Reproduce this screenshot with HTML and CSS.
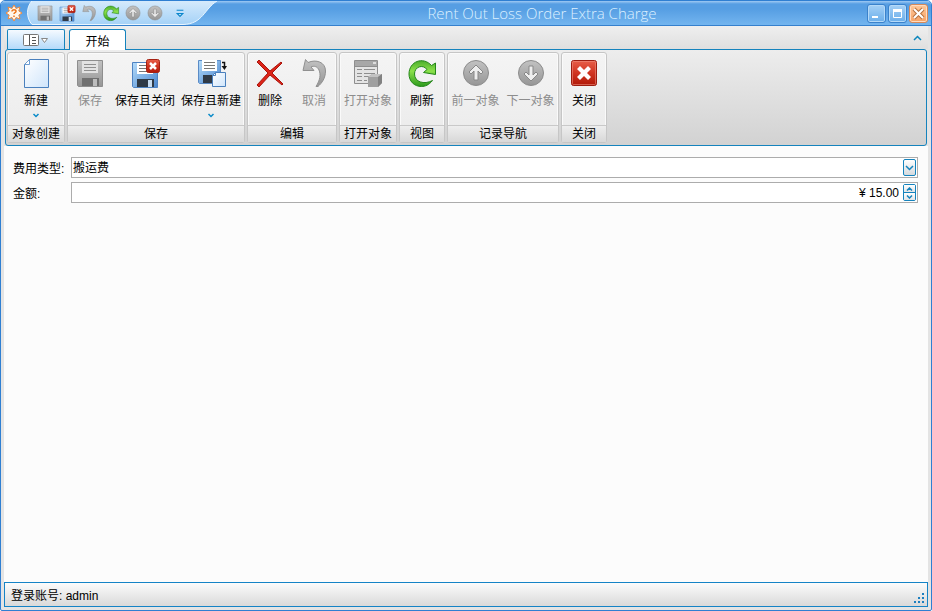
FILE: index.html
```
<!DOCTYPE html>
<html lang="zh-CN">
<head>
    <meta charset="UTF-8">
    <meta name="viewport" content="width=device-width, initial-scale=1.0">
    <title>Rent Out Loss Order Extra Charge</title>
    <link rel="stylesheet" href="styles.css">
</head>
<body>
    <svg class="sprite" width="0" height="0" aria-hidden="true">
        <defs>
            <linearGradient id="g-gray" x1="0" y1="0" x2="0" y2="1"><stop offset="0" stop-color="#c2c2c2"/><stop offset="1" stop-color="#969696"/></linearGradient>
            <linearGradient id="g-blue" x1="0" y1="0" x2="1" y2="1"><stop offset="0" stop-color="#b5dcfa"/><stop offset="1" stop-color="#4a86cf"/></linearGradient>
            <linearGradient id="g-page" x1="0" y1="0" x2="1" y2="1"><stop offset="0" stop-color="#ffffff"/><stop offset="1" stop-color="#cfe5fb"/></linearGradient>
            <linearGradient id="g-red" x1="0" y1="0" x2="0" y2="1"><stop offset="0" stop-color="#e8604a"/><stop offset="0.5" stop-color="#d03420"/><stop offset="1" stop-color="#b01808"/></linearGradient>
            <linearGradient id="g-green" x1="0" y1="0" x2="0" y2="1"><stop offset="0" stop-color="#4cae2c"/><stop offset="0.4" stop-color="#8be04a"/><stop offset="1" stop-color="#2c9a1c"/></linearGradient>
            <linearGradient id="g-qat" x1="0" y1="0" x2="0" y2="1"><stop offset="0" stop-color="#d5eafc"/><stop offset="1" stop-color="#a5d2f7"/></linearGradient>
        </defs>
        <symbol id="i-page" viewBox="0 0 32 32">
            <path d="M9.500 2.500H28.500V30.500H4.500V7.500Z" fill="url(#g-page)" stroke="#4a80bd"/>
            <path d="M4.500 7.500H9.500V2.500Z" fill="#fff" stroke="#6b9bd0"/>
        </symbol>
        <symbol id="i-save-off" viewBox="0 0 32 32">
            <path d="M3.500 3.500H28.500V29.500H4.500L3.500 28.500Z" fill="url(#g-gray)" stroke="#8e8e8e"/>
            <path d="M8 4H24V16H8Z" fill="#e2e2e2"/>
            <path d="M10 7.500H22M10 10.500H22M10 13.500H22" stroke="#8f8f8f"/>
            <path d="M8 21H25V29H8Z" fill="#707070"/>
            <path d="M19 22H23V29H19Z" fill="#bdbdbd"/>
        </symbol>
        <symbol id="i-save-close" viewBox="0 0 32 32">
            <path d="M3.500 5.500H28.500V30.500H4.500L3.500 29.500Z" fill="url(#g-blue)" stroke="#4f83c2"/>
            <path d="M8 6H24V17H8Z" fill="#fff"/>
            <path d="M10 8.500H22M10 11.500H22M10 14.500H22" stroke="#777"/>
            <path d="M8 22H25V30H8Z" fill="#303a46"/>
            <path d="M19 23H23V30H19Z" fill="#c8dcf0"/>
            <rect x="17.500" y="2.500" width="13" height="13" rx="2" fill="url(#g-red)" stroke="#a52112"/>
            <path d="M21 6L27 12M27 6L21 12" stroke="#fff" stroke-width="2.500"/>
        </symbol>
        <symbol id="i-save-new" viewBox="0 0 32 32">
            <path d="M3.500 3.500H25.500V26.500H4.500L3.500 25.500Z" fill="url(#g-blue)" stroke="#5a8bc6"/>
            <path d="M7 3H22V14H7Z" fill="#fff"/>
            <path d="M9 5.500H20M9 8.500H20M9 11.500H20" stroke="#777"/>
            <path d="M8 18H20V26H8Z" fill="#303a46"/>
            <path d="M20.500 15.500H30.500V29.500H17.500V18.500Z" fill="url(#g-page)" stroke="#4a80bd"/>
            <path d="M17.500 18.500H20.500V15.500" fill="none" stroke="#4a80bd"/>
            <path d="M27 5.500H29.500V10" fill="none" stroke="#111" stroke-width="1.500"/>
            <path d="M26.500 9H32L29.500 13Z" fill="#111"/>
        </symbol>
        <symbol id="i-delete" viewBox="0 0 32 32">
            <path d="M3 5L5 3L16 14L27 5L28 6L18 16L29 27L28 28L16 18L5 30L3 28L14 16Z" fill="#dd2418" stroke="#a8150d"/>
        </symbol>
        <symbol id="i-undo" viewBox="0 0 32 32">
            <path d="M7.500 2.500L10 5.500C18 2 27.500 5 27.500 14C27.500 21 24 26 20 29.500H18C22 23 23 18 21 13C19.500 9.500 16 8.500 13 10L16 13.500H5Z" fill="url(#g-gray)" stroke="#909090"/>
        </symbol>
        <symbol id="i-open" viewBox="0 0 32 32">
            <path d="M2.500 3.500H25.500V26.500H2.500Z" fill="#e4e4e4" stroke="#8e8e8e"/>
            <path d="M3 4H25V9H3Z" fill="#a8a8a8"/>
            <path d="M2 9.500H26" stroke="#8e8e8e"/>
            <path d="M21 5H24V7H21Z" fill="#ddd"/>
            <path d="M5 12.500H10M12 12.500H23M5 16.500H10M12 16.500H23M5 19.500H10M12 19.500H23M5 23.500H10M12 23.500H15" stroke="#8e8e8e"/>
            <path d="M16 20L20 17H30V26L26 30H16Z" fill="#a0a0a0"/>
            <path d="M16 20L20 17H30L26 20Z" fill="#c2c2c2"/>
            <path d="M26 20L30 17V26L26 30Z" fill="#828282"/>
        </symbol>
        <symbol id="i-refresh" viewBox="0 0 32 32">
            <path d="M29.500 6V17.500L17.500 15.500L21 12.500C17 7 8.500 9.500 8.500 17C8.500 25 18 28 26.500 23.500C23 28 19 29.500 15.500 29.500C8 29.500 3 24 3 17C3 4.500 17 -1 25.500 8.500Z" fill="url(#g-green)" stroke="#24861a"/>
        </symbol>
        <symbol id="i-up" viewBox="0 0 32 32">
            <circle cx="16" cy="16" r="12.500" fill="url(#g-gray)" stroke="#8c8c8c"/>
            <path d="M16 8L23 15L21 17L18 14V23H14V14L11 17L9 15Z" fill="#eee" stroke="#888"/>
        </symbol>
        <symbol id="i-down" viewBox="0 0 32 32">
            <circle cx="16" cy="16" r="12.500" fill="url(#g-gray)" stroke="#8c8c8c"/>
            <path d="M16 24L23 17L21 15L18 18V9H14V18L11 15L9 17Z" fill="#eee" stroke="#888"/>
        </symbol>
        <symbol id="i-close" viewBox="0 0 32 32">
            <rect x="3.500" y="3.500" width="25" height="25" rx="2" fill="url(#g-red)" stroke="#9c1d10"/>
            <rect x="4.500" y="4.500" width="23" height="23" rx="1" fill="none" stroke="#ee8c7c" stroke-opacity="0.600"/>
            <path d="M9 12L12 9L16 13L20 9L23 12L19 16L23 20L20 23L16 19L12 23L9 20L13 16Z" fill="#fff"/>
        </symbol>
        <symbol id="i-chevron" viewBox="0 0 8 5">
            <path d="M1.500 1L4 3.500L6.500 1" fill="none" stroke="#0b8bc9" stroke-width="1.500"/>
        </symbol>
    </svg>

    <div class="window">
        <header class="titlebar">
            <svg class="app-icon" viewBox="0 0 16 16"><path d="M8 0L10 3.500L14 2L12.800 6L16 8L12.800 10L14 14L10 12.500L8 16L6 12.500L2 14L3.200 10L0 8L3.200 6L2 2L6 3.500Z" fill="#fff7ec" stroke="#f08a3c"/><path d="M6 6.500C6 4 10.200 4.200 10 6.500C9.800 7.800 8 7.600 8 9M8 10.500V12" fill="none" stroke="#ef7417" stroke-width="1.500"/></svg>
            <div class="quick">
                <svg class="quick-bg" viewBox="0 0 190 24"><path d="M5 0H190C177 8 176 23 156 23.500H5C-1 17 -1 6 5 0Z" fill="url(#g-qat)"/><path d="M190 0C177 8 176 23 156 23.500H5C-1 17 -1 6 5 0" fill="none" stroke="#eaf6ff"/></svg>
                <button class="quick-btn" aria-label="保存"><svg><use href="#i-save-off"/></svg></button>
                <button class="quick-btn" aria-label="保存且关闭"><svg><use href="#i-save-close"/></svg></button>
                <button class="quick-btn" aria-label="取消"><svg><use href="#i-undo"/></svg></button>
                <button class="quick-btn" aria-label="刷新"><svg><use href="#i-refresh"/></svg></button>
                <button class="quick-btn" aria-label="前一对象"><svg><use href="#i-up"/></svg></button>
                <button class="quick-btn" aria-label="下一对象"><svg><use href="#i-down"/></svg></button>
                <button class="quick-btn quick-more" aria-label="更多"><svg viewBox="0 0 16 16"><path d="M5 5.500H11M5.500 8.500H10.500L8 11Z" fill="#fff" stroke="#0b86cc"/></svg></button>
            </div>
            <h1>Rent Out Loss Order Extra Charge</h1>
            <div class="controls">
                <button aria-label="最小化"><svg viewBox="0 0 17 17"><path d="M4 11H10V13H4Z" fill="#fff"/></svg></button>
                <button aria-label="最大化"><svg viewBox="0 0 17 17"><path d="M4.500 4.500H12.500V12.500H4.500Z" fill="none" stroke="#fff"/><path d="M4 4H13V7H4Z" fill="#fff"/></svg></button>
                <button class="exit" aria-label="关闭窗口"><svg viewBox="0 0 17 17"><path d="M4 4L13 13M13 4L4 13" stroke="#b5713f" stroke-width="4"/><path d="M4 4L13 13M13 4L4 13" stroke="#fff" stroke-width="2"/></svg></button>
            </div>
        </header>

        <div class="frame">
            <nav class="tabs">
                <button class="tab-file" aria-label="菜单"><svg width="26" height="14" viewBox="0 0 26 14"><rect x="0.500" y="1.500" width="15" height="11" rx="1" fill="#fff" stroke="#777"/><path d="M6.500 2V12M9 4.500H13M9 7.500H13M9 10.500H13" stroke="#555"/><path d="M18.500 5.500H24.500L21.500 9.500Z" fill="#fff" stroke="#888"/></svg></button>
                <button class="tab">开始</button>
                <button class="collapse" aria-label="折叠"><svg width="9" height="6" viewBox="0 0 9 6"><path d="M1 5L4.500 1.500L8 5" fill="none" stroke="#0b86bd" stroke-width="1.500"/></svg></button>
            </nav>

            <section class="ribbon">
                <div class="group">
                    <div class="group-items">
                        <button class="cmd"><svg><use href="#i-page"/></svg><span>新建</span><svg class="arrow"><use href="#i-chevron"/></svg></button>
                    </div>
                    <div class="group-title">对象创建</div>
                </div>
                <div class="group">
                    <div class="group-items">
                        <button class="cmd" disabled><svg><use href="#i-save-off"/></svg><span>保存</span></button>
                        <button class="cmd"><svg><use href="#i-save-close"/></svg><span>保存且关闭</span></button>
                        <button class="cmd"><svg><use href="#i-save-new"/></svg><span>保存且新建</span><svg class="arrow"><use href="#i-chevron"/></svg></button>
                    </div>
                    <div class="group-title">保存</div>
                </div>
                <div class="group">
                    <div class="group-items">
                        <button class="cmd"><svg><use href="#i-delete"/></svg><span>删除</span></button>
                        <button class="cmd" disabled><svg><use href="#i-undo"/></svg><span>取消</span></button>
                    </div>
                    <div class="group-title">编辑</div>
                </div>
                <div class="group">
                    <div class="group-items">
                        <button class="cmd" disabled><svg><use href="#i-open"/></svg><span>打开对象</span></button>
                    </div>
                    <div class="group-title">打开对象</div>
                </div>
                <div class="group">
                    <div class="group-items">
                        <button class="cmd"><svg><use href="#i-refresh"/></svg><span>刷新</span></button>
                    </div>
                    <div class="group-title">视图</div>
                </div>
                <div class="group">
                    <div class="group-items">
                        <button class="cmd wide" disabled><svg><use href="#i-up"/></svg><span>前一对象</span></button>
                        <button class="cmd wide" disabled><svg><use href="#i-down"/></svg><span>下一对象</span></button>
                    </div>
                    <div class="group-title">记录导航</div>
                </div>
                <div class="group">
                    <div class="group-items">
                        <button class="cmd"><svg><use href="#i-close"/></svg><span>关闭</span></button>
                    </div>
                    <div class="group-title">关闭</div>
                </div>
            </section>

            <main class="content">
                <form>
                    <label for="charge-type">费用类型:</label>
                    <div class="field">
                        <select id="charge-type"><option>搬运费</option></select>
                        <span class="drop"><svg width="9" height="6" viewBox="0 0 9 6"><path d="M1 1L4.500 4.500L8 1" fill="none" stroke="#1583bd" stroke-width="1.500"/></svg></span>
                    </div>
                    <label for="amount">金额:</label>
                    <div class="field">
                        <input type="text" id="amount" class="amount" value="¥ 15.00">
                        <div class="spin">
                            <button type="button" aria-label="增加"><svg width="7" height="4" viewBox="0 0 7 4"><path d="M1 3.500L3.500 1L6 3.500" fill="none" stroke="#1583bd" stroke-width="1.500"/></svg></button>
                            <button type="button" aria-label="减少"><svg width="7" height="4" viewBox="0 0 7 4"><path d="M1 0.500L3.500 3L6 0.500" fill="none" stroke="#1583bd" stroke-width="1.500"/></svg></button>
                        </div>
                    </div>
                </form>
            </main>

            <footer class="status">
                <span>登录账号: admin</span>
                <svg class="grip" width="12" height="12" viewBox="0 0 12 12"><path d="M9 1H11V3H9ZM5 5H7V7H5ZM9 5H11V7H9ZM1 9H3V11H1ZM5 9H7V11H5ZM9 9H11V11H9Z" fill="#1c7fc0"/></svg>
            </footer>
        </div>
    </div>
</body>
</html>
```
FILE: styles.css
```
*{
    margin: 0;
    padding: 0;
    box-sizing: border-box;
}

body, button, input, select{
    font-family: "Liberation Sans", "Noto Sans CJK SC", sans-serif;
    font-size: 12px;
    color: #000;
}

button{
    border: none;
    background: none;
}

svg{
    display: block;
}

.sprite{
    position: absolute;
}

.window{
    display: flex;
    flex-direction: column;
    min-height: 100vh;
    border: 1px solid #2f7fd2;
    border-radius: 5px 5px 2px 2px;
    overflow: hidden;
    background-color: #e4e4e4;
}

/* title bar */
.titlebar{
    display: flex;
    align-items: center;
    height: 25px;
    padding: 0 3px 0 5px;
    border-bottom: 1px solid #3580cd;
    background: linear-gradient(#9fc9f3, #569ee3 3px, #569ee3 8px, #73b5ef);
}

.app-icon{
    width: 16px;
    height: 16px;
    margin-right: 5px;
}

.quick{
    position: relative;
    display: flex;
    align-items: center;
    width: 190px;
    height: 24px;
    padding-left: 7px;
}

.quick-bg{
    position: absolute;
    left: 0;
    top: 0;
    width: 190px;
    height: 24px;
}

.quick-btn{
    position: relative;
    width: 22px;
    padding: 0 2px;
}

.quick-btn svg{
    width: 18px;
    height: 18px;
}

.quick-more{
    margin-left: 3px;
}

.titlebar h1{
    flex: 1;
    font-family: "Open Sans", sans-serif;
    font-size: 15px;
    font-weight: 300;
    line-height: 24px;
    text-align: center;
    color: #dcf0ff;
}

.controls{
    display: flex;
    gap: 2px;
}

.controls button{
    width: 19px;
    height: 19px;
    border: 1px solid #3b82cb;
    border-radius: 3px;
    background: linear-gradient(#a5d0f6, #6aaeea);
    box-shadow: inset 0 0 0 1px #b4d9f8;
}

.controls .exit{
    border-color: #d98a58;
    background: linear-gradient(#ffc89a, #f7a265);
    box-shadow: inset 0 0 0 1px #ffdcc0;
}

.frame{
    flex: 1;
    display: flex;
    flex-direction: column;
    padding: 0 3px 3px;
}

/* ribbon */
.tabs{
    display: flex;
    align-items: flex-end;
    gap: 4px;
    height: 23px;
    padding: 0 3px;
    background: linear-gradient(#efefef, #dfdfdf);
}

.tab-file{
    display: flex;
    align-items: center;
    justify-content: center;
    width: 58px;
    height: 20px;
    border: 1px solid #1583bd;
    border-bottom: none;
    border-radius: 2px 2px 0 0;
    background: linear-gradient(#f5faff, #b5dafa);
}

.tab{
    position: relative;
    width: 57px;
    height: 21px;
    margin-bottom: -1px;
    border: 1px solid #1583bd;
    border-bottom: none;
    border-radius: 3px 3px 0 0;
    background-color: #fff;
}

.collapse{
    align-self: center;
    margin-left: auto;
    padding: 0 3px;
}

.ribbon{
    display: flex;
    gap: 2px;
    margin: 0 1px;
    padding: 2px 1px;
    border: 1px solid #1583bd;
    border-radius: 3px;
    background: linear-gradient(#ededed, #d2d2d2);
}

.group{
    display: flex;
    flex-direction: column;
    border: 1px solid #c6c6c6;
    border-radius: 3px;
    background: linear-gradient(#f4f4f4, #ebebeb);
    box-shadow: inset 0 0 0 1px #fafafa;
}

.group-items{
    display: flex;
    justify-content: center;
    height: 72px;
}

.group-title{
    height: 17px;
    padding: 0 4px;
    border-top: 1px solid #c9c9c9;
    background: linear-gradient(#eeeeee, #d8d8d8);
    line-height: 16px;
    text-align: center;
}

.cmd{
    display: flex;
    flex-direction: column;
    align-items: center;
    min-width: 44px;
    padding: 4px 3px 0;
}

.wide{
    min-width: 55px;
}

.cmd svg{
    width: 32px;
    height: 32px;
}

.cmd span{
    margin: 3px 0;
    line-height: 18px;
}

.cmd .arrow{
    width: 8px;
    height: 5px;
}

.cmd:disabled{
    color: #8d8d8d;
}

/* form */
.content{
    flex: 1;
    padding: 11px 10px 11px 9px;
    background-color: #fcfcfc;
}

form{
    display: grid;
    grid-template-columns: 54px 1fr;
    gap: 4px;
    align-items: center;
}

label{
    white-space: nowrap;
}

.field{
    display: flex;
    height: 21px;
    padding: 1px;
    border: 1px solid #acacac;
    background-color: #fff;
    position: relative;
}

.field select, .field input{
    flex: 1;
    min-width: 0;
    border: none;
    outline: none;
    background: none;
    appearance: none;
}

.field .amount{
    padding-right: 4px;
    text-align: right;
}

.drop{
    position: absolute;
    right: 1px;
    top: 1px;
    display: flex;
    align-items: center;
    justify-content: center;
    width: 13px;
    height: 17px;
    border: 1px solid #1583bd;
    border-radius: 2px;
    background: linear-gradient(#fff, #d5d9dd);
    pointer-events: none;
}

.spin{
    display: flex;
    flex-direction: column;
    width: 13px;
    border: 1px solid #1583bd;
    border-radius: 2px;
}

.spin button{
    flex: 1;
    display: flex;
    align-items: center;
    justify-content: center;
    background: linear-gradient(#fff, #e2e4e6);
}

.spin button + button{
    border-top: 1px solid #1583bd;
}

/* status bar */
.status{
    display: flex;
    align-items: center;
    justify-content: space-between;
    height: 25px;
    padding: 0 2px 0 6px;
    border: 1px solid #1583c6;
    background: linear-gradient(#fcfcfc, #d9d9d9);
}

.grip{
    align-self: flex-end;
    margin-bottom: 2px;
}
```
